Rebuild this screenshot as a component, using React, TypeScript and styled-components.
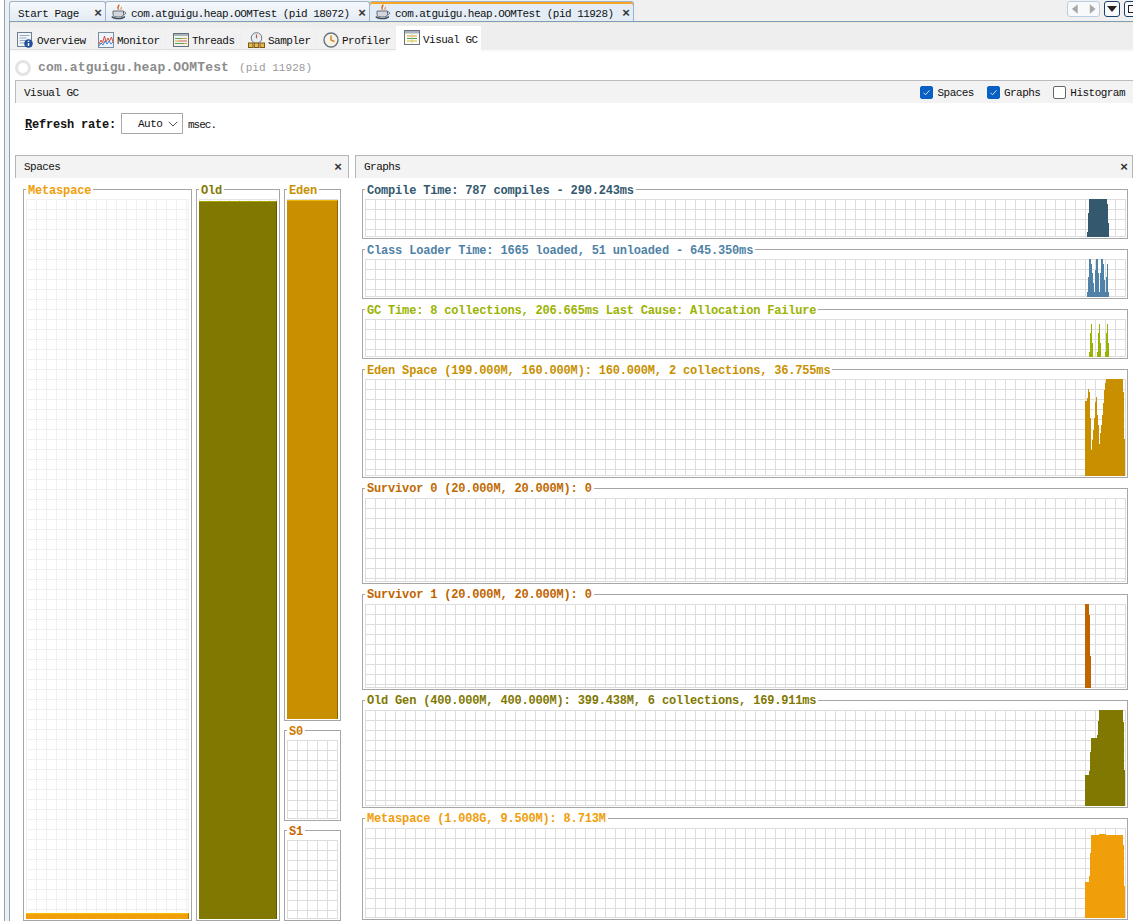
import React from "react";
import styled, { createGlobalStyle } from "styled-components";

const Global = createGlobalStyle`
  html, body { margin: 0; padding: 0; background: #fff; }
  body { font-family: "Liberation Mono", "DejaVu Sans Mono", monospace; font-size: 11px; color: #111; }
  * { box-sizing: border-box; }
`;

const Page = styled.div`
  width: 1133px; height: 921px; overflow: hidden; background: #fff; padding-left: 4px;
`;
const Shell = styled.div`
  height: 921px; border-left: 1px solid #8ba3bd; background: #f0f0f0; padding-left: 4px;
`;
const Main = styled.div`
  height: 921px; border-left: 1px solid #8ba3bd; background: #fff; display: flex; flex-direction: column;
`;
const TabStrip = styled.div`
  flex: none; height: 22px; background: #f0f0f0; border-bottom: 1px solid #7f9db9;
  display: flex; align-items: flex-end; padding-top: 2px; margin-left: -1px;
`;
const DocTab = styled.div<{ $w: number; $pad: number; $active?: boolean }>`
  flex: none; width: ${p => p.$w}px; height: 20px; display: flex; align-items: center;
  padding-left: ${p => p.$pad}px; gap: 4px; letter-spacing: -0.53px; font-size: 11px;
  border: 1px solid #9db4cc; border-bottom: none; border-radius: 3px 3px 0 0; margin-right: -1px;
  background: ${p => (p.$active ? "#e4edf6" : "linear-gradient(#f6f9fc, #e3ebf4)")};
  box-shadow: ${p => (p.$active ? "inset 0 2px 0 #f6a623" : "none")};
`;
const DocLabel = styled.span`
  flex: 1; white-space: pre; padding-top: 5px;
`;
const CloseMark = styled.span`
  font-family: "Liberation Sans", sans-serif; font-weight: 700; font-size: 13px; color: #333;
  letter-spacing: 0; line-height: 12px; flex: none; margin-right: 4px; width: 8px; text-align: center;
`;
const TabClose = styled(CloseMark)`
  margin-right: 3px; padding-top: 2px; line-height: 12px;
`;
const StripControls = styled.div`
  margin-left: auto; height: 20px; display: flex; align-items: flex-start; gap: 4px; padding-top: 0;
`;
const ScrollGroup = styled.div`
  width: 33px; height: 16px; display: flex; border: 1px solid #b9cde2; border-radius: 3px; background: #f7f9fb;
  svg { flex: 1; height: 14px; }
`;
const DarkBtn = styled.div<{ $cut?: boolean }>`
  width: 16px; height: 16px; flex: none; border: 1px solid #17406d; border-radius: 3px; background: #fafafa;
  display: flex; align-items: center; justify-content: center; margin-right: ${p => (p.$cut ? "-7px" : "0")};
`;
const SubTabs = styled.div`
  flex: none; height: 30px; background: #eeeeee; border-top: 1px solid #ece9d8;
  display: flex; align-items: flex-end; gap: 1px; padding-bottom: 2px; border-bottom: 0;
  box-shadow: inset 0 -2px 0 #fafafa;
`;
const SubTab = styled.div<{ $w: number; $active?: boolean }>`
  flex: none; width: ${p => p.$w}px; height: ${p => (p.$active ? "26px" : "22px")};
  display: flex; align-items: ${p => (p.$active ? "flex-start" : "center")}; gap: 3px;
  padding-left: ${p => (p.$active ? "8px" : "7px")}; padding-top: ${p => (p.$active ? "4px" : "3px")};
  background: ${p => (p.$active ? "#ffffff" : "#f1f1f1")}; letter-spacing: -0.53px;
  margin-bottom: ${p => (p.$active ? "-2px" : "0")}; position: relative;
  border-bottom: ${p => (p.$active ? "0" : "1px solid #dddddd")};
  span { line-height: 16px; padding-top: 2px; }
`;
const TitleRow = styled.div`
  flex: none; height: 28px; display: flex; align-items: center; padding: 3px 0 0 5px; gap: 7px;
`;
const Spinner = styled.div`
  width: 16px; height: 16px; border-radius: 50%; border: 3px solid #e4e4e4; flex: none;
`;
const ProcName = styled.span`
  font-size: 13px; font-weight: 700; color: #8c8c8c; letter-spacing: 0.16px;
`;
const ProcPid = styled.span`
  font-size: 11px; color: #9a9a9a; letter-spacing: 0.03px; margin-left: 10px;
`;
const ViewBar = styled.div`
  flex: none; height: 23px; margin-left: 5px; display: flex; align-items: center; padding: 2px 0 0 8px;
  background: #f3f3f3; border-top: 1px solid #bbbbbb; border-left: 1px solid #bbbbbb; letter-spacing: -0.53px;
`;
const Checks = styled.div`
  margin-left: auto; display: flex; align-items: center; padding-right: 8px;
`;
const Check = styled.label<{ $gap: number }>`
  display: flex; align-items: center; gap: 4px; margin-left: ${p => p.$gap}px; letter-spacing: -0.53px;
`;
const CheckBox = styled.span<{ $on?: boolean }>`
  width: 13px; height: 13px; border-radius: 2px; flex: none; display: flex; align-items: center; justify-content: center;
  background: ${p => (p.$on ? "#0a5fc2" : "#fff")}; border: 1px solid ${p => (p.$on ? "#0a5fc2" : "#666")};
  margin-top: -2px;
`;
const RefreshRow = styled.div`
  flex: none; height: 52px; padding: 10px 0 0 15px; display: flex; align-items: flex-start; gap: 0;
`;
const RefreshLabel = styled.span`
  font-size: 12px; font-weight: 700; letter-spacing: -0.2px; line-height: 21px; width: 96px; padding-top: 2px;
  u { text-decoration: underline; }
`;
const Select = styled.div`
  width: 62px; height: 21px; border: 1px solid #a8a8a8; display: flex; align-items: center;
  padding: 1px 0 0 16px; letter-spacing: -0.53px; gap: 6px; background: #fff;
`;
const Unit = styled.span`
  letter-spacing: -1px; margin-left: 5px; line-height: 21px; padding-top: 2px;
`;
const Panels = styled.div`
  flex: 1; display: flex; margin-left: 5px; gap: 6px; min-height: 0;
`;
const Panel = styled.div<{ $w?: number }>`
  ${p => (p.$w ? `width: ${p.$w}px; flex: none;` : "flex: 1;")}
  display: flex; flex-direction: column; min-width: 0;
`;
const PanelHead = styled.div<{ $pr: number }>`
  flex: none; height: 23px; background: #f3f3f3; border: 1px solid #b5b5b5; border-bottom: 0;
  display: flex; align-items: center; justify-content: space-between; padding: 0 ${p => p.$pr}px 0 8px; letter-spacing: -0.53px;
`;
const SpacesBody = styled.div`
  padding: 11px 0 0 8px; display: flex; gap: 4px;
`;
const SpacesCol = styled.div`
  width: 57px; flex: none; display: flex; flex-direction: column; gap: 9px;
`;
const Frame = styled.div<{ $w?: number; $h: number; $pr?: number }>`
  position: relative; flex: none; height: ${p => p.$h}px; ${p => (p.$w ? `width: ${p.$w}px;` : "")}
  border: 1px solid #a6a6a6; padding: 9px ${p => p.$pr ?? 1}px 1px 2px; display: flex; flex-direction: column;
`;
const Legend = styled.span<{ $c: string; $up?: boolean }>`
  position: absolute; top: ${p => (p.$up ? "-7px" : "-6px")}; left: 2px; background: #fff; padding: 0 2px; white-space: pre;
  font-size: 12px; line-height: 14px; font-weight: 700; color: ${p => p.$c}; letter-spacing: -0.18px;
`;
const Plot = styled.div<{ $line: string }>`
  flex: 1; min-height: 0; display: flex; flex-direction: column; justify-content: flex-end;
  background-color: #fff;
  background-image:
    linear-gradient(to top, ${p => p.$line} 1px, transparent 1px),
    linear-gradient(to left, ${p => p.$line} 1px, transparent 1px),
    linear-gradient(to bottom, ${p => p.$line} 1px, transparent 1px),
    linear-gradient(to right, ${p => p.$line} 1px, transparent 1px);
  background-size: 100% 100%, 100% 100%, 10px 10px, 10px 10px;
`;
const Bar = styled.div<{ $h: number; $fill: string; $top: string; $side: string }>`
  flex: none; height: ${p => p.$h}px; background: ${p => p.$fill};
  border-top: 1px solid ${p => p.$top}; border-right: 1px solid ${p => p.$side};
`;
const GraphsBody = styled.div`
  padding: 11px 5px 0 7px; display: flex; flex-direction: column; gap: 10px;
`;
const ChartSvg = styled.svg`
  display: block; width: 100%; flex: 1; min-height: 0;
`;

const CoffeeIcon = () => (
  <svg width="16" height="16" viewBox="0 0 16 16">
    <path d="M8 0c1.800 2.200-1.800 3.200.2 6.500C5.300 5 6 2.500 8 0z M10.500 2.500c.7 1.600-1 2.400.2 4-1.800-1-1.200-2.700-.2-4z" fill="#d8641c" />
    <path d="M2 7h10.500v3.500c0 1.900-2 2.500-5.200 2.500S2 12.400 2 10.500z" fill="#d3d7db" stroke="#55616e" strokeWidth=".9" />
    <path d="M12.500 8c2.800-.5 3 2.600 0 2.800" fill="none" stroke="#55616e" />
    <path d="M.8 12.500c2.200 2.800 11 2.800 13 0" fill="none" stroke="#3f4c59" strokeWidth="1.400" />
  </svg>
);
const OverviewIcon = () => (
  <svg width="17" height="16" viewBox="0 0 17 16">
    <rect x=".5" y=".5" width="14" height="14" fill="#f2f5f8" stroke="#6d7f92" />
    <path d="M2.500 3.500h10M2.500 6h7M2.500 8.500h6M2.500 11h5" stroke="#9cadbd" />
    <circle cx="11.500" cy="11.500" r="4.300" fill="#23509c" />
    <path d="M11.500 8.800v1.200M11.500 11v3" stroke="#fff" strokeWidth="1.500" />
  </svg>
);
const MonitorIcon = () => (
  <svg width="16" height="16" viewBox="0 0 16 16">
    <rect x=".5" y=".5" width="15" height="15" fill="#eef4fb" stroke="#7b8da1" />
    <path d="M1 12l2-4 1.500 3 2-7 1.500 6 2-4 1.500 3 2-4 1.500 5" fill="none" stroke="#e0483c" />
    <path d="M1 14l2-3 2 2 2-4 2 3 2-3 2 3 2-2" fill="none" stroke="#3d7fc9" />
  </svg>
);
const ThreadsIcon = () => (
  <svg width="16" height="16" viewBox="0 0 16 16">
    <rect x=".5" y="1.500" width="15" height="13" fill="#f2f3ee" stroke="#66707a" />
    <rect x="1" y="2" width="14" height="2" fill="#a8b2bd" />
    <path d="M2 6.500h7" stroke="#5da25a" /><path d="M9 6.500h5" stroke="#d4a43a" />
    <path d="M2 9h4" stroke="#d4a43a" /><path d="M6 9h8" stroke="#c8605a" />
    <path d="M2 11.500h9" stroke="#5da25a" /><path d="M11 11.500h3" stroke="#d4a43a" />
  </svg>
);
const SamplerIcon = () => (
  <svg width="17" height="16" viewBox="0 0 17 16">
    <circle cx="8.500" cy="6" r="5.300" fill="#e8edf2" stroke="#6f7a86" />
    <path d="M8.500 2.500v3.800" stroke="#c8503c" strokeWidth="1.200" />
    <rect x=".5" y="11" width="4.500" height="4.500" fill="#e6b84c" stroke="#7a5a18" />
    <rect x="6.200" y="11" width="4.500" height="4.500" fill="#e6b84c" stroke="#7a5a18" />
    <rect x="12" y="11" width="4.500" height="4.500" fill="#e6b84c" stroke="#7a5a18" />
  </svg>
);
const ProfilerIcon = () => (
  <svg width="16" height="16" viewBox="0 0 16 16">
    <circle cx="8" cy="8" r="7" fill="#f6f2e6" stroke="#68747f" strokeWidth="1.400" />
    <path d="M8 3.500V8l3.500 1.500" fill="none" stroke="#d8842c" strokeWidth="1.500" />
  </svg>
);
const VisualIcon = () => (
  <svg width="16" height="16" viewBox="0 0 16 16">
    <rect x=".5" y=".5" width="15" height="14" fill="#fcfcf6" stroke="#68727c" />
    <rect x="1" y="1" width="14" height="2.500" fill="#a9b4bf" />
    <path d="M3 6h10" stroke="#e0a020" /><path d="M3 8.500h10" stroke="#48a048" /><path d="M3 11h10" stroke="#d8c020" />
    <path d="M8 4v9" stroke="#c8c8c8" />
  </svg>
);
const Tick = () => (
  <svg width="9" height="9" viewBox="0 0 9 9"><path d="M1.500 4.800l2 2 4-4.500" fill="none" stroke="#cfe2f7" strokeWidth="1" /></svg>
);
const Chevron = () => (
  <svg width="10" height="6" viewBox="0 0 10 6"><path d="M.8.800L5 5l4.200-4.200" fill="none" stroke="#555" /></svg>
);

type Step = [number, number];
const chartPoints = (steps: Step[], zoomTop: number, plotTop: number, height: number) => {
  const px = (z: number) => 695 + z / 3;
  const py = (z: number) => zoomTop + z / 3 - plotTop;
  const pts: string[] = [`${px(steps[0][0])},${height}`];
  steps.forEach(([x, y], i) => {
    if (i === steps.length - 1) return;
    const next = steps[i + 1][0];
    const top = y < 0 ? height : py(y);
    pts.push(`${px(x)},${top}`, `${px(next)},${top}`);
  });
  pts.push(`${px(steps[steps.length - 1][0])},${height}`);
  return pts.join(" ");
};

type Graph = { title: string; color: string; top: number; h: number; zoomTop: number; up?: boolean; steps: Step[] };
const graphs: Graph[] = [
  { title: "Compile Time: 787 compiles - 290.243ms", color: "#34596f", top: 189, h: 50, zoomTop: 180,
    steps: [[81, 157], [84, 100], [87, 57], [141, 72], [144, 130], [147, 0]] },
  { title: "Class Loader Time: 1665 loaded, 51 unloaded - 645.350ms", color: "#4f82a6", top: 249, h: 50, zoomTop: 180,
    steps: [[81, 335], [84, 290], [87, 237], [93, 252], [96, 280], [99, 310], [102, 335], [105, 270], [108, 237], [114, 280], [117, 335], [120, 280], [123, 237], [129, 252], [132, 300], [135, 335], [138, 290], [141, 252], [144, 335], [147, 0]] },
  { title: "GC Time: 8 collections, 206.665ms Last Cause: Allocation Failure", color: "#9ab300", top: 309, h: 50, zoomTop: 180,
    steps: [[87, 515], [90, 460], [93, 432], [96, 490], [99, -1], [111, 515], [114, 460], [117, 432], [120, 490], [123, -1], [135, 515], [138, 460], [141, 432], [144, 490], [147, 0]] },
  { title: "Eden Space (199.000M, 160.000M): 160.000M, 2 collections, 36.755ms", color: "#c89000", top: 369, h: 109, zoomTop: 365,
    steps: [[75, 108], [81, 100], [84, 72], [87, 80], [90, 160], [93, 255], [96, 225], [99, 195], [102, 160], [105, 110], [108, 95], [111, 150], [114, 180], [117, 237], [120, 205], [123, 180], [126, 150], [129, 115], [132, 75], [135, 55], [138, 42], [189, 80], [192, 222], [195, 0]] },
  { title: "Survivor 0 (20.000M, 20.000M): 0", color: "#c06a00", top: 488, h: 96, zoomTop: 0, up: true, steps: [] },
  { title: "Survivor 1 (20.000M, 20.000M): 0", color: "#c06400", top: 594, h: 96, zoomTop: 590, up: true,
    steps: [[75, 42], [87, 75], [90, 198], [93, 0]] },
  { title: "Old Gen (400.000M, 400.000M): 399.438M, 6 collections, 169.911ms", color: "#807800", top: 700, h: 108, zoomTop: 695, up: true,
    steps: [[75, 240], [87, 228], [90, 170], [93, 128], [111, 120], [114, 78], [117, 45], [189, 82], [192, 225], [195, 0]] },
  { title: "Metaspace (1.008G, 9.500M): 8.713M", color: "#f09e0a", top: 818, h: 102, zoomTop: 695, up: true,
    steps: [[75, 560], [87, 543], [90, 475], [93, 420], [117, 417], [138, 420], [189, 450], [192, 572], [195, 0]] },
];

const GraphFrame = ({ g }: { g: Graph }) => {
  const plotH = g.h - 12;
  return (
    <Frame $h={g.h}>
      <Legend $c={g.color} $up={g.up}>{g.title}</Legend>
      <Plot $line="#dddddd">
        {g.steps.length > 0 && (
          <ChartSvg viewBox={`0 0 761 ${plotH}`} preserveAspectRatio="none" shapeRendering="crispEdges">
            <polygon points={chartPoints(g.steps, g.zoomTop, g.top + 10, plotH)} fill={g.color} />
          </ChartSvg>
        )}
      </Plot>
    </Frame>
  );
};

export default function App() {
  return (
    <Page>
      <Global />
      <Shell>
        <Main>
          <TabStrip>
            <DocTab $w={97} $pad={8}><DocLabel>Start Page</DocLabel><TabClose>×</TabClose></DocTab>
            <DocTab $w={265} $pad={5}><CoffeeIcon /><DocLabel>com.atguigu.heap.OOMTest (pid 18072)</DocLabel><TabClose>×</TabClose></DocTab>
            <DocTab $w={265} $pad={5} $active><CoffeeIcon /><DocLabel>com.atguigu.heap.OOMTest (pid 11928)</DocLabel><TabClose>×</TabClose></DocTab>
            <StripControls>
              <ScrollGroup>
                <svg viewBox="0 0 16 14"><path d="M10 2v10L4 7z" fill="#a8a8a8" /></svg>
                <svg viewBox="0 0 16 14"><path d="M6 2v10l6-5z" fill="#a8a8a8" /></svg>
              </ScrollGroup>
              <DarkBtn><svg width="10" height="6" viewBox="0 0 10 6"><path d="M0 0h10L5 6z" fill="#222" /></svg></DarkBtn>
              <DarkBtn $cut><svg width="8" height="8" viewBox="0 0 8 8"><rect x=".5" y=".5" width="7" height="7" fill="none" stroke="#222" /></svg></DarkBtn>
            </StripControls>
          </TabStrip>
          <SubTabs>
            <SubTab $w={80}><OverviewIcon /><span>Overview</span></SubTab>
            <SubTab $w={74}><MonitorIcon /><span>Monitor</span></SubTab>
            <SubTab $w={74}><ThreadsIcon /><span>Threads</span></SubTab>
            <SubTab $w={74}><SamplerIcon /><span>Sampler</span></SubTab>
            <SubTab $w={79}><ProfilerIcon /><span>Profiler</span></SubTab>
            <SubTab $w={85} $active><VisualIcon /><span>Visual GC</span></SubTab>
          </SubTabs>
          <TitleRow>
            <Spinner />
            <span><ProcName>com.atguigu.heap.OOMTest</ProcName><ProcPid>(pid 11928)</ProcPid></span>
          </TitleRow>
          <ViewBar>
            <span>Visual GC</span>
            <Checks>
              <Check $gap={0}><CheckBox $on><Tick /></CheckBox>Spaces</Check>
              <Check $gap={13}><CheckBox $on><Tick /></CheckBox>Graphs</Check>
              <Check $gap={13}><CheckBox />Histogram</Check>
            </Checks>
          </ViewBar>
          <RefreshRow>
            <RefreshLabel><u>R</u>efresh rate:</RefreshLabel>
            <Select>Auto<Chevron /></Select>
            <Unit>msec.</Unit>
          </RefreshRow>
          <Panels>
            <Panel $w={334}>
              <PanelHead $pr={2}>Spaces<CloseMark>×</CloseMark></PanelHead>
              <SpacesBody>
                <Frame $w={169} $h={732} $pr={2}>
                  <Legend $c="#f09e0a">Metaspace</Legend>
                  <Plot $line="#f0f0f0">
                    <Bar $h={6} $fill="#f09e0a" $top="#f2c200" $side="#a87000" />
                  </Plot>
                </Frame>
                <Frame $w={84} $h={732} $pr={2}>
                  <Legend $c="#807800">Old</Legend>
                  <Plot $line="#e4e4e4">
                    <Bar $h={718} $fill="#807800" $top="#a8a000" $side="#5c5600" />
                  </Plot>
                </Frame>
                <SpacesCol>
                  <Frame $h={532} $pr={2}>
                    <Legend $c="#c89000">Eden</Legend>
                    <Plot $line="#dddddd">
                      <Bar $h={519} $fill="#c89000" $top="#f0b800" $side="#8a6400" />
                    </Plot>
                  </Frame>
                  <Frame $h={91} $pr={2}>
                    <Legend $c="#d07800">S0</Legend>
                    <Plot $line="#dddddd" />
                  </Frame>
                  <Frame $h={91} $pr={2}>
                    <Legend $c="#c86400">S1</Legend>
                    <Plot $line="#dddddd" />
                  </Frame>
                </SpacesCol>
              </SpacesBody>
            </Panel>
            <Panel>
              <PanelHead $pr={0}>Graphs<CloseMark>×</CloseMark></PanelHead>
              <GraphsBody>
                {graphs.map(g => <GraphFrame key={g.title} g={g} />)}
              </GraphsBody>
            </Panel>
          </Panels>
        </Main>
      </Shell>
    </Page>
  );
}
